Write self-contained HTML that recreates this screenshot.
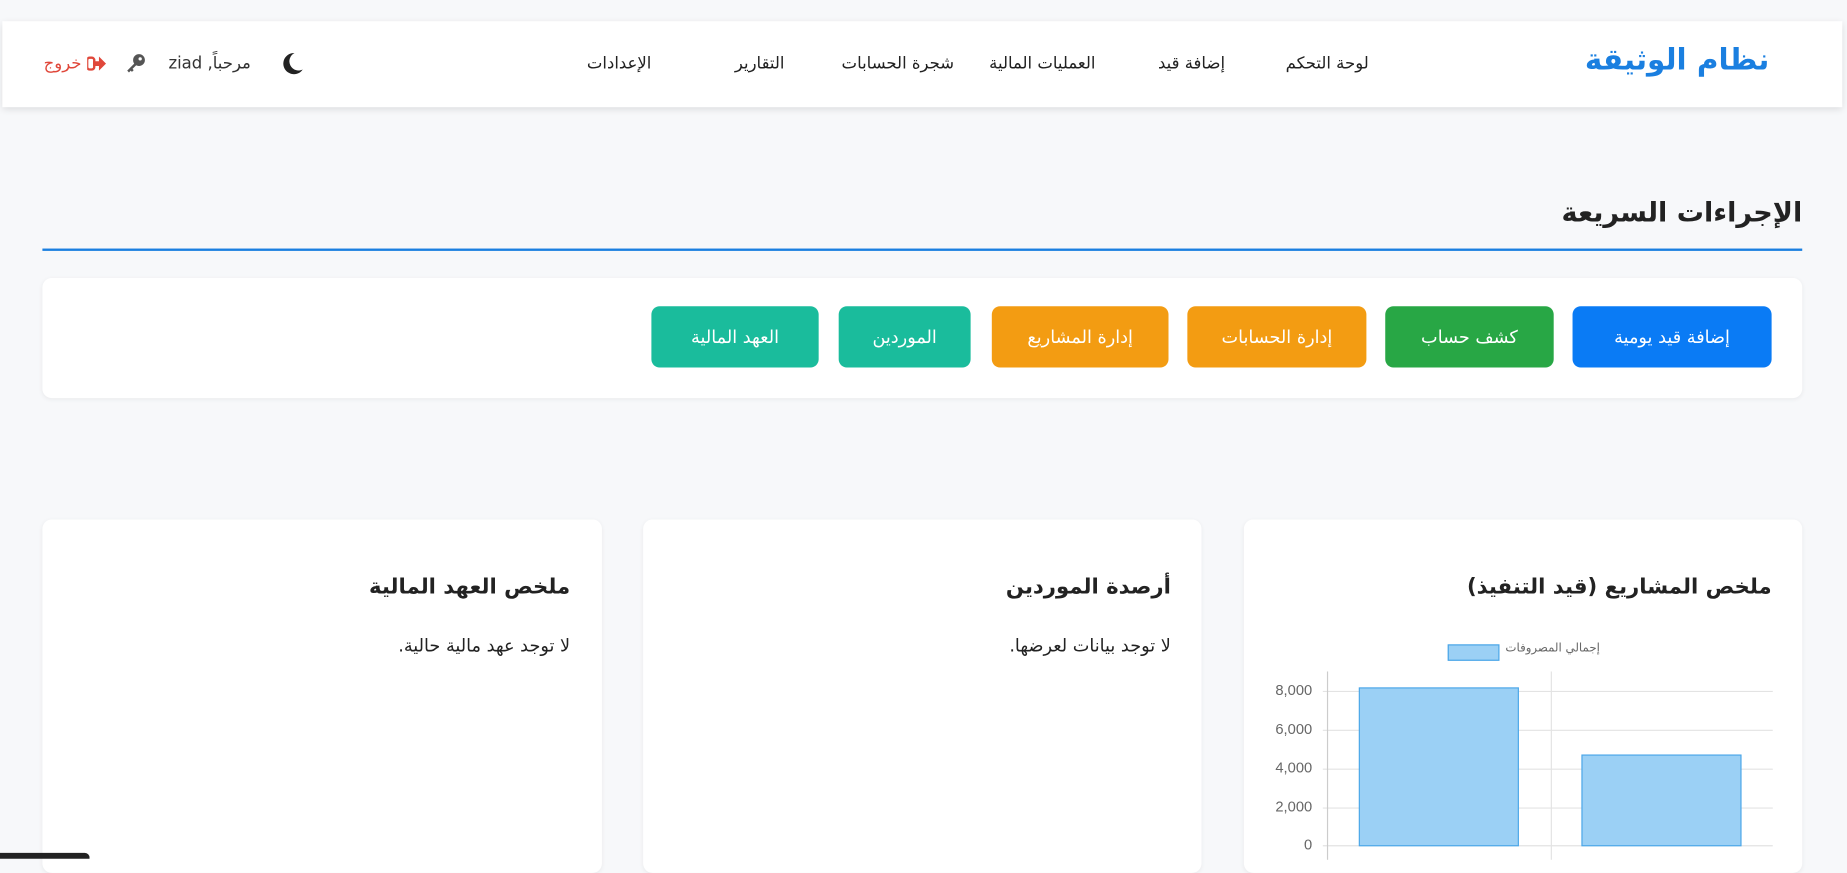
<!DOCTYPE html>
<html><head><meta charset="utf-8">
<style>
html,body{margin:0;padding:0;width:1847px;height:858px;overflow:hidden;background:#f7f8fa;}
#w{position:absolute;left:0;top:0;width:1568px;height:729px;transform:scale(1.17793);transform-origin:0 0;font-family:"DejaVu Sans","Liberation Sans",sans-serif;color:#222;}
.a{position:absolute;white-space:nowrap;}
.nav{position:absolute;left:2px;top:18px;width:1562px;height:73px;background:#fff;box-shadow:0 2px 6px rgba(0,0,0,.12);}
.nl{position:absolute;top:46px;font-size:14px;color:#222;direction:rtl;white-space:nowrap;}
.card{position:absolute;background:#fff;border-radius:8px;box-shadow:0 1px 4px rgba(0,0,0,.06);}
.btn{position:absolute;top:260px;height:52px;border-radius:7px;color:#fff;font-size:15px;line-height:52px;text-align:center;direction:rtl;}
.t{position:absolute;font-size:18px;font-weight:bold;direction:rtl;text-align:right;white-space:nowrap;}
.p{position:absolute;font-size:15px;direction:rtl;text-align:right;white-space:nowrap;}
.yl{position:absolute;font-family:"Liberation Sans",sans-serif;font-size:12.5px;color:#666;text-align:right;width:40px;}
</style></head><body><div id="w">
<div class="nav"></div>
<div class="a" style="right:66px;top:36px;font-size:25px;font-weight:bold;color:#1a7fe0;direction:rtl">نظام الوثيقة</div>
<div class="nl" style="right:406px">لوحة التحكم</div>
<div class="nl" style="right:528px">إضافة قيد</div>
<div class="nl" style="right:638px">العمليات المالية</div>
<div class="nl" style="right:758px">شجرة الحسابات</div>
<div class="nl" style="right:902px">التقارير</div>
<div class="nl" style="right:1015px">الإعدادات</div>
<svg class="a" style="left:237px;top:43px" width="22" height="22" viewBox="0 0 22 22"><path d="M13 2A9 9 0 1 0 20 16A7.5 7.5 0 0 1 13 2Z" fill="#222"/></svg>
<div class="a" style="right:1355px;top:46px;font-size:14px;color:#333;direction:rtl">مرحباً, ziad</div>
<svg class="a" style="left:106px;top:45px" width="18" height="18" viewBox="0 0 18 18"><circle cx="12" cy="6" r="5" fill="#555"/><circle cx="13" cy="5" r="1.4" fill="#fff"/><path d="M9 8L2 15L3.5 16.5L5 15L6 16L7.5 14.5L6.5 13.5L10.5 9.5Z" fill="#555"/></svg>
<div class="a" style="left:37px;top:46px;font-size:14px;color:#e0473a">خروج</div>
<svg class="a" style="left:74px;top:47px" width="16" height="14" viewBox="0 0 16 14"><rect x="0" y="2" width="6" height="10" rx="2" fill="none" stroke="#e0473a" stroke-width="2"/><path d="M5 5H10V1L16 7L10 13V9H5Z" fill="#e0473a"/></svg>

<div class="t" style="right:38px;top:168px;font-size:23px">الإجراءات السريعة</div>
<div class="a" style="left:36px;top:211px;width:1494px;height:2px;background:#1a7fe0"></div>
<div class="card" style="left:36px;top:236px;width:1494px;height:102px"></div>
<div class="btn" style="left:1335px;width:169px;background:#0a7bf5">إضافة قيد يومية</div>
<div class="btn" style="left:1176px;width:143px;background:#28a745">كشف حساب</div>
<div class="btn" style="left:1008px;width:152px;background:#f39c12">إدارة الحسابات</div>
<div class="btn" style="left:842px;width:150px;background:#f39c12">إدارة المشاريع</div>
<div class="btn" style="left:712px;width:112px;background:#1abc9c">الموردين</div>
<div class="btn" style="left:553px;width:142px;background:#1abc9c">العهد المالية</div>

<div class="card" style="left:36px;top:441px;width:475px;height:300px"></div>
<div class="card" style="left:546px;top:441px;width:474px;height:300px"></div>
<div class="card" style="left:1056px;top:441px;width:474px;height:300px"></div>
<div class="t" style="right:1084px;top:488px">ملخص العهد المالية</div>
<div class="p" style="right:1084px;top:539px">لا توجد عهد مالية حالية.</div>
<div class="t" style="right:574px;top:488px">أرصدة الموردين</div>
<div class="p" style="right:574px;top:539px">لا توجد بيانات لعرضها.</div>
<div class="t" style="right:64px;top:488px">ملخص المشاريع (قيد التنفيذ)</div>

<div class="a" style="left:1229px;top:547px;width:42px;height:12px;background:#9bd0f5;border:1px solid #4aa6e8"></div>
<div class="a" style="left:1278px;top:545px;font-size:10px;color:#666;direction:rtl">إجمالي المصروفات</div>
<svg class="a" style="left:1120px;top:570px" width="390" height="160" viewBox="0 0 390 160">
<g stroke="#e3e3e3" stroke-width="1">
<line x1="3" y1="17" x2="385" y2="17"/><line x1="3" y1="50" x2="385" y2="50"/><line x1="3" y1="83" x2="385" y2="83"/><line x1="3" y1="116" x2="385" y2="116"/><line x1="3" y1="148" x2="385" y2="148"/>
<line x1="197" y1="0" x2="197" y2="160"/>
</g>
<line x1="7" y1="0" x2="7" y2="160" stroke="#ccc"/>
<rect x="34" y="14" width="135" height="134" fill="#9bd0f5" stroke="#4aa6e8"/>
<rect x="223" y="71" width="135" height="77" fill="#9bd0f5" stroke="#4aa6e8"/>
</svg>
<div class="yl" style="left:1074px;top:579px">8,000</div>
<div class="yl" style="left:1074px;top:612px">6,000</div>
<div class="yl" style="left:1074px;top:645px">4,000</div>
<div class="yl" style="left:1074px;top:678px">2,000</div>
<div class="yl" style="left:1074px;top:710px">0</div>
<div class="a" style="left:0;top:724px;width:76px;height:5px;background:#222;border-radius:0 4px 0 0"></div>
</div></body></html>
